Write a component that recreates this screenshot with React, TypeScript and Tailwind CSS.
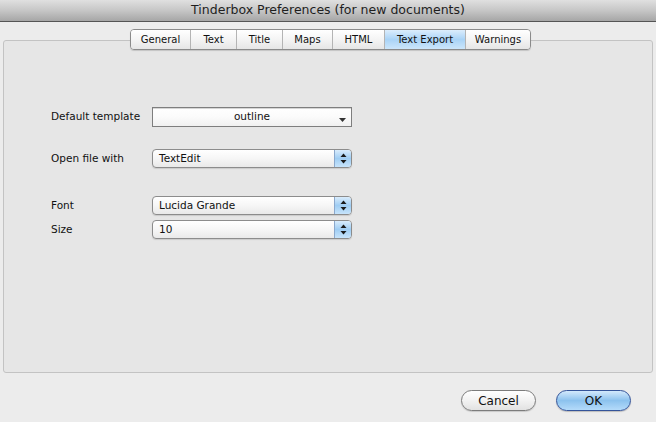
import React from "react";

const tabs = [
  { label: "General", w: 59 },
  { label: "Text", w: 46 },
  { label: "Title", w: 46 },
  { label: "Maps", w: 50 },
  { label: "HTML", w: 52 },
  { label: "Text Export", w: 81 },
  { label: "Warnings", w: 65 },
];

function Arrows() {
  return (
    <svg width="7" height="11" viewBox="0 0 7 11">
      <path d="M3.5 0.5 L6.5 4 L0.5 4 Z" fill="#1a1a1a" />
      <path d="M3.5 10.5 L6.5 7 L0.5 7 Z" fill="#1a1a1a" />
    </svg>
  );
}

function Popup({ value }: { value: string }) {
  return (
    <div className="flex h-[19px] w-[200px] items-stretch overflow-hidden rounded-[4px] border border-[#8c8c8c] bg-gradient-to-b from-[#ffffff] via-[#f6f6f6] to-[#e9e9e9] shadow-[0_1px_1px_rgba(0,0,0,0.12)]">
      <div className="flex flex-1 items-center pl-[6px] text-[10.5px] text-[#111]">{value}</div>
      <div className="flex w-[17px] items-center justify-center border-l border-[#8ba8cc] bg-gradient-to-b from-[#d9ecfc] via-[#9fcdf3] to-[#c7e4fb]">
        <Arrows />
      </div>
    </div>
  );
}

function Row({ label, children, className }: { label: string; children: React.ReactNode; className?: string }) {
  return (
    <div className={"flex items-center " + (className ?? "")}>
      <div className="w-[101px] text-[10.5px] text-[#111]">{label}</div>
      {children}
    </div>
  );
}

export default function App() {
  return (
    <div
      className="flex h-[422px] w-[656px] flex-col bg-[#ececec] text-[#111]"
      style={{ fontFamily: '"DejaVu Sans", "Noto Sans", sans-serif' }}
    >
      {/* Title bar */}
      <div className="flex h-[22px] items-center justify-center border-b border-[#555] bg-gradient-to-b from-[#e0e0e0] via-[#c6c6c6] to-[#a6a6a6] text-[12.5px] text-[#1e1e1e]">
        Tinderbox Preferences (for new documents)
      </div>

      <div className="flex flex-col px-[3px]">
        {/* Tabs */}
        <div className="relative z-10 mt-[7px] flex pl-[127px]">
          <div className="flex h-[21px] overflow-hidden rounded-[4px] border border-[#8a8a8a] shadow-[0_1px_1px_rgba(0,0,0,0.15)]">
            {tabs.map((t, i) => {
              const sel = t.label === "Text Export";
              return (
                <div
                  key={t.label}
                  style={{ width: t.w }}
                  className={
                    "flex items-center justify-center text-[10px] " +
                    (i > 0 ? "border-l border-[#b4b4b4] " : "") +
                    (sel
                      ? "bg-gradient-to-b from-[#dcedfc] via-[#a9d3f6] to-[#cce6fb] text-[#111]"
                      : "bg-gradient-to-b from-[#ffffff] via-[#f4f4f4] to-[#e6e6e6] text-[#111]")
                  }
                >
                  {t.label}
                </div>
              );
            })}
          </div>
        </div>

        {/* Panel */}
        <div className="-mt-[10px] flex h-[333px] flex-col rounded-[3px] border border-[#c3c3c3] bg-[#e6e6e6] pl-[47px] pt-[66px]">
          <Row label="Default template">
            <div className="relative flex h-[20px] w-[200px] items-center justify-center border border-[#7e7e7e] bg-gradient-to-b from-[#ffffff] via-[#fbfbfb] to-[#f0f0f0] text-[10.5px] text-[#111] shadow-[inset_0_1px_0_#d6d6d6]">
              outline
              <svg className="absolute right-[5px] top-[10px]" width="7" height="4" viewBox="0 0 7 4">
                <path d="M0 0 L7 0 L3.5 4 Z" fill="#333" />
              </svg>
            </div>
          </Row>
          <Row label="Open file with" className="mt-[22px]">
            <Popup value="TextEdit" />
          </Row>
          <Row label="Font" className="mt-[28px]">
            <Popup value="Lucida Grande" />
          </Row>
          <Row label="Size" className="mt-[5px]">
            <Popup value="10" />
          </Row>
        </div>

        {/* Buttons */}
        <div className="mt-[17px] flex justify-end gap-[20px] pr-[22px]">
          <div className="flex h-[21px] w-[75px] items-center justify-center rounded-full border border-[#7c7c7c] bg-gradient-to-b from-[#ffffff] via-[#f2f2f2] to-[#e2e2e2] text-[12px] text-[#111] shadow-[0_1px_1px_rgba(0,0,0,0.15)]">
            Cancel
          </div>
          <div className="flex h-[21px] w-[75px] items-center justify-center rounded-full border border-[#34549a] bg-gradient-to-b from-[#d3e9fc] via-[#8cc2ee] to-[#b4dbfa] text-[12px] text-[#111] shadow-[0_1px_1px_rgba(0,0,0,0.2)]">
            OK
          </div>
        </div>
      </div>
    </div>
  );
}
